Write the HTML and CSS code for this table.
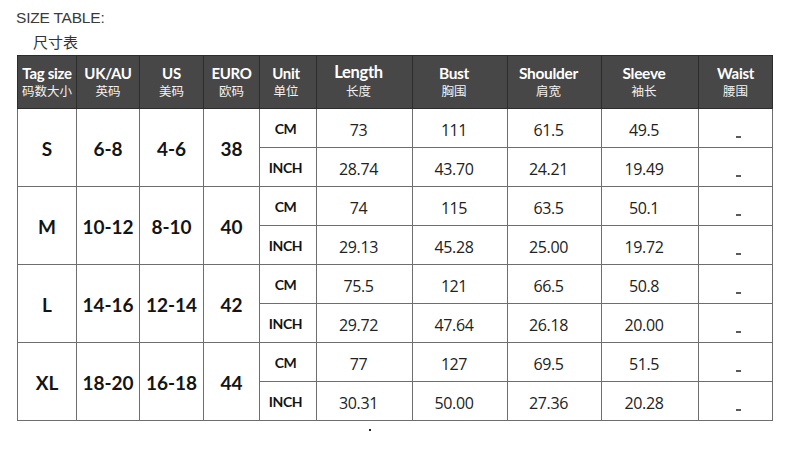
FILE: index.html
```html
<!DOCTYPE html>
<html>
<head>
<meta charset="utf-8">
<link rel="stylesheet" href="styles.css">
</head>
<body>
<div class="page">
  <div class="title">SIZE TABLE:</div>
  <div class="subtitle">尺寸表</div>
  <table class="sizes">
    <colgroup>
      <col class="c-tag"><col class="c-uk"><col class="c-us"><col class="c-eu"><col class="c-unit">
      <col class="c-len"><col class="c-bust"><col class="c-sh"><col class="c-sl"><col class="c-waist">
    </colgroup>
    <thead>
      <tr>
        <th class="h-small"><span class="en">Tag size</span><span class="zh">码数大小</span></th>
        <th class="h-small"><span class="en">UK/AU</span><span class="zh">英码</span></th>
        <th class="h-small"><span class="en">US</span><span class="zh">美码</span></th>
        <th class="h-small"><span class="en">EURO</span><span class="zh">欧码</span></th>
        <th class="h-small h-unit"><span class="en">Unit</span><span class="zh">单位</span></th>
        <th class="h-val h-len"><span class="en">Length</span><span class="zh">长度</span></th>
        <th class="h-val"><span class="en">Bust</span><span class="zh">胸围</span></th>
        <th class="h-val"><span class="en">Shoulder</span><span class="zh">肩宽</span></th>
        <th class="h-val"><span class="en">Sleeve</span><span class="zh">袖长</span></th>
        <th class="h-waist"><span class="en">Waist</span><span class="zh">腰围</span></th>
      </tr>
    </thead>
    <tbody>
      <tr>
        <td class="size" rowspan="2">S</td><td class="size" rowspan="2">6-8</td><td class="size" rowspan="2">4-6</td><td class="size" rowspan="2">38</td>
        <td class="unit">CM</td><td class="val">73</td><td class="val">111</td><td class="val">61.5</td><td class="val">49.5</td><td class="waist"><span class="dash"></span></td>
      </tr>
      <tr>
        <td class="unit">INCH</td><td class="val">28.74</td><td class="val">43.70</td><td class="val">24.21</td><td class="val">19.49</td><td class="waist"><span class="dash"></span></td>
      </tr>
      <tr>
        <td class="size" rowspan="2">M</td><td class="size" rowspan="2">10-12</td><td class="size" rowspan="2">8-10</td><td class="size" rowspan="2">40</td>
        <td class="unit">CM</td><td class="val">74</td><td class="val">115</td><td class="val">63.5</td><td class="val">50.1</td><td class="waist"><span class="dash"></span></td>
      </tr>
      <tr>
        <td class="unit">INCH</td><td class="val">29.13</td><td class="val">45.28</td><td class="val">25.00</td><td class="val">19.72</td><td class="waist"><span class="dash"></span></td>
      </tr>
      <tr>
        <td class="size" rowspan="2">L</td><td class="size" rowspan="2">14-16</td><td class="size" rowspan="2">12-14</td><td class="size" rowspan="2">42</td>
        <td class="unit">CM</td><td class="val">75.5</td><td class="val">121</td><td class="val">66.5</td><td class="val">50.8</td><td class="waist"><span class="dash"></span></td>
      </tr>
      <tr>
        <td class="unit">INCH</td><td class="val">29.72</td><td class="val">47.64</td><td class="val">26.18</td><td class="val">20.00</td><td class="waist"><span class="dash"></span></td>
      </tr>
      <tr>
        <td class="size" rowspan="2">XL</td><td class="size" rowspan="2">18-20</td><td class="size" rowspan="2">16-18</td><td class="size" rowspan="2">44</td>
        <td class="unit">CM</td><td class="val">77</td><td class="val">127</td><td class="val">69.5</td><td class="val">51.5</td><td class="waist"><span class="dash"></span></td>
      </tr>
      <tr>
        <td class="unit">INCH</td><td class="val">30.31</td><td class="val">50.00</td><td class="val">27.36</td><td class="val">20.28</td><td class="waist"><span class="dash"></span></td>
      </tr>
    </tbody>
  </table>
  <div class="speck"></div>
</div>
</body>
</html>
```

FILE: styles.css
```css
html, body {
  margin: 0;
  padding: 0;
  background: #ffffff;
}

.page {
  padding: 9px 0 0 16px;
}

.title {
  font-family: "Liberation Sans", Arial, sans-serif;
  font-size: 15.5px;
  line-height: 18px;
  color: #3a3a3a;
  letter-spacing: -0.2px;
}

.subtitle {
  font-family: "Noto Sans CJK SC", sans-serif;
  font-size: 15px;
  line-height: 20px;
  color: #333;
  margin: 5px 0 0 17px;
}

.sizes {
  border-collapse: collapse;
  table-layout: fixed;
  width: 756px;
  margin: 3px 0 0 1px;
}

.c-tag { width: 59px; }
.c-uk { width: 63px; }
.c-us { width: 64px; }
.c-eu { width: 56px; }
.c-unit { width: 57px; }
.c-len { width: 96px; }
.c-bust { width: 95px; }
.c-sh { width: 94px; }
.c-sl { width: 97px; }
.c-waist { width: 74px; }

.sizes th {
  background: #474747;
  color: #ffffff;
  height: 52px;
  padding: 0;
  border: 1px solid #2c2c2c;
  text-align: center;
  vertical-align: middle;
  font-weight: normal;
}

.sizes th .en {
  display: block;
  font-family: Lato, "Open Sans", sans-serif;
  font-weight: 700;
  font-size: 15px;
  line-height: 18px;
  letter-spacing: -0.3px;
}

.sizes th .zh {
  display: block;
  font-family: "Noto Sans CJK SC", sans-serif;
  font-size: 12.5px;
  line-height: 18px;
  color: #f2f2f2;
}

.sizes th.h-val .en {
  font-size: 15.5px;
}

.sizes th.h-len .en {
  font-size: 16.5px;
  line-height: 20px;
  margin-top: -3px;
}

.sizes th.h-val {
  padding-right: 12px;
}

.sizes th.h-unit {
  padding-right: 4px;
}

.sizes td {
  border: 1px solid #6e6e6e;
  height: 38px;
  padding: 0;
  text-align: center;
  vertical-align: middle;
  color: #1a1a1a;
}

.sizes td.size {
  font-family: Lato, "Open Sans", sans-serif;
  font-weight: 700;
  font-size: 19px;
  color: #141414;
  padding-top: 2px;
}

.sizes td.unit {
  font-family: Lato, "Open Sans", sans-serif;
  font-weight: 700;
  font-size: 14px;
  letter-spacing: -0.4px;
  padding-right: 5px;
  color: #141414;
}

.sizes td.val {
  font-family: "Open Sans", "Noto Sans", sans-serif;
  font-size: 16px;
  letter-spacing: -0.4px;
  height: 35px;
  padding: 3px 12px 0 0;
  color: #222;
}

.sizes td.waist {
  padding: 0 0 0 6px;
}

.dash {
  display: block;
  width: 5px;
  height: 2px;
  margin: 17px auto 0;
  background: #5a5a5a;
}

.speck {
  width: 2px;
  height: 2px;
  background: #222;
  margin: 8px 0 0 353px;
}
```
